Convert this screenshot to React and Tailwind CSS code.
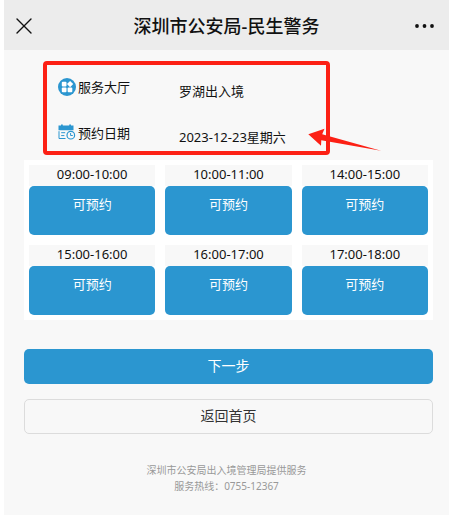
import { X } from 'lucide-react';

const BLUE_BUTTON = 'bg-[#2b96d0] text-white hover:bg-[#2488bf] transition-colors';

const slots = [
  '09:00-10:00',
  '10:00-11:00',
  '14:00-15:00',
  '15:00-16:00',
  '16:00-17:00',
  '17:00-18:00',
];

function HallIcon() {
  return (
    <svg className="w-[18px] h-[18px] mb-0.5 shrink-0" viewBox="0 0 18 18" aria-hidden="true">
      <circle cx="9" cy="9" r="9" fill="#2b96d0" />
      <g fill="#fff">
        <rect x="3.8" y="3.8" width="4.7" height="4.7" rx="1" />
        <rect x="3.8" y="9.6" width="4.7" height="4.7" rx="1" />
        <rect x="9.6" y="9.6" width="4.7" height="4.7" rx="1" />
        <path d="M12.1 3 15.2 6.1 12.1 9.2 9 6.1Z" />
      </g>
    </svg>
  );
}

function DateIcon() {
  return (
    <svg className="w-[18px] h-[18px] mb-0.5 shrink-0" viewBox="0 0 18 18" aria-hidden="true">
      <path d="M0.5 1.6h2.5V0.4h1.8v1.2h6.4V0.4h1.8v1.2h2.5v4.6h-15Z" fill="#2b96d0" />
      <g fill="none" stroke="#2b96d0">
        <path d="M1 7.2v7.3h6.5M3.2 8.7h4M3.2 11.6h3.2" />
        <circle cx="12.8" cy="11.2" r="3.8" strokeWidth="1.2" />
        <path d="M12.6 9v2.5h2.2" />
      </g>
    </svg>
  );
}

function InfoRow({ icon, label, value }) {
  return (
    <div className="flex items-center h-[30px]">
      <dt className="flex items-center gap-0.5 w-[121px] shrink-0">
        {icon}
        {label}
      </dt>
      <dd className="pt-2 whitespace-nowrap">{value}</dd>
    </div>
  );
}

function TimeSlot({ time }) {
  return (
    <li className="flex flex-col">
      <p className="h-[21px] leading-[19px] text-center bg-[#f8f8f8]">{time}</p>
      <button
        type="button"
        aria-label={`${time} 可预约`}
        className={`h-[49px] pb-3 rounded-[5px] ${BLUE_BUTTON}`}
      >
        可预约
      </button>
    </li>
  );
}

export default function App() {
  return (
    <div className="min-h-screen border-l-4 border-white bg-[#f8f8f8] font-['Noto_Sans','Noto_Sans_CJK_SC',sans-serif] text-[13px] text-[#111]">
      {/* Header */}
      <header className="h-[50px] px-3 pt-0.5 grid grid-cols-[1fr_auto_1fr] items-center bg-[#ececec]">
        <button type="button" aria-label="关闭" className="w-4 flex justify-center">
          <X className="w-7 h-7 shrink-0" strokeWidth={1.2} />
        </button>
        <h1 className="text-[18px] leading-6 pb-px font-medium">深圳市公安局-民生警务</h1>
        <button type="button" aria-label="更多" className="w-6 flex justify-center justify-self-end">
          <svg className="w-5 h-1 shrink-0" viewBox="0 0 20 4" fill="currentColor">
            <circle cx="2" cy="2" r="1.9" />
            <circle cx="9.5" cy="2" r="1.9" />
            <circle cx="17" cy="2" r="1.9" />
          </svg>
        </button>
      </header>

      <main className="pl-5 pr-4 pt-[11px]">
        {/* Booking info */}
        <div className="relative ml-[19px] max-w-[287px]">
          <dl className="flex flex-col gap-4 border-4 border-[#fc2015] rounded-[4px] pt-2 pb-0.5 pl-[11px]">
            <InfoRow icon={<HallIcon />} label="服务大厅" value="罗湖出入境" />
            <InfoRow icon={<DateIcon />} label="预约日期" value="2023-12-23星期六" />
          </dl>
          <svg
            className="absolute -right-[52px] bottom-1 w-[74px] h-[24px]"
            viewBox="0 0 74 24"
            fill="#fc2015"
            aria-hidden="true"
          >
            <path d="M0.3 7.3 16.5 1.8 14.2 7.2 73 23.7 13.3 13.2 13 18.8Z" />
          </svg>
        </div>

        {/* Time slots */}
        <ul className="mt-[5px] p-[5px] grid grid-cols-3 gap-2.5 bg-white">
          {slots.map((time) => (
            <TimeSlot key={time} time={time} />
          ))}
        </ul>

        {/* Actions */}
        <div className="mt-[29px] flex flex-col gap-[15px] text-[14px]">
          <button type="button" className={`h-[35px] pb-0.5 rounded-[5px] ${BLUE_BUTTON}`}>
            下一步
          </button>
          <button
            type="button"
            className="h-[35px] pb-0.5 rounded-[5px] border border-[#dcdcdc] text-[#333]"
          >
            返回首页
          </button>
        </div>
      </main>

      <footer className="pt-7 pb-5 text-center text-[10px] leading-4 text-[#999]">
        <p>深圳市公安局出入境管理局提供服务</p>
        <p>服务热线：0755-12367</p>
      </footer>
    </div>
  );
}
